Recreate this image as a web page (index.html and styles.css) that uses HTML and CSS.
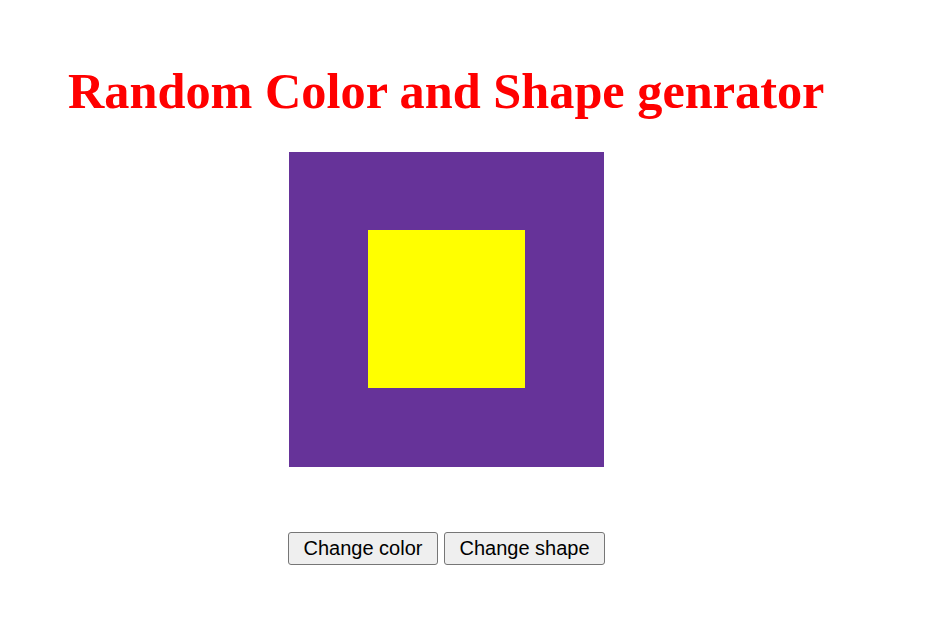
FILE: index.html
```html
<!DOCTYPE html>
<html>
<head>
<meta charset="utf-8">
<link rel="stylesheet" href="styles.css">
</head>
<body>
<h1 class="title">Random Color and Shape genrator</h1>
<div class="canvas">
  <div class="shape"></div>
</div>
<div class="controls">
  <button class="btn">Change color</button>
  <button class="btn">Change shape</button>
</div>
</body>
</html>
```
FILE: styles.css
```css
html, body {
  margin: 0;
  padding: 0;
  background: #ffffff;
}
.title {
  margin: 0;
  padding: 64px 0 0 68px;
  font-family: "Liberation Serif", "Times New Roman", serif;
  font-weight: bold;
  font-size: 50.3px;
  line-height: 54px;
  color: #ff0000;
}
.canvas {
  margin: 34px 0 0 289px;
  width: 315px;
  height: 315px;
  background: #663399;
  display: flex;
  align-items: center;
  justify-content: center;
}
.shape {
  width: 157px;
  height: 158px;
  margin-bottom: 1px;
  background: #ffff00;
}
.controls {
  margin: 65px 0 0 288px;
  display: flex;
  gap: 6px;
}
.btn {
  font-family: "Liberation Sans", Arial, sans-serif;
  font-size: 20px;
  height: 33px;
  padding: 1px 14.5px;
  background: #efefef;
  border: 1px solid #767676;
  border-radius: 3px;
  color: #000;
}
```
